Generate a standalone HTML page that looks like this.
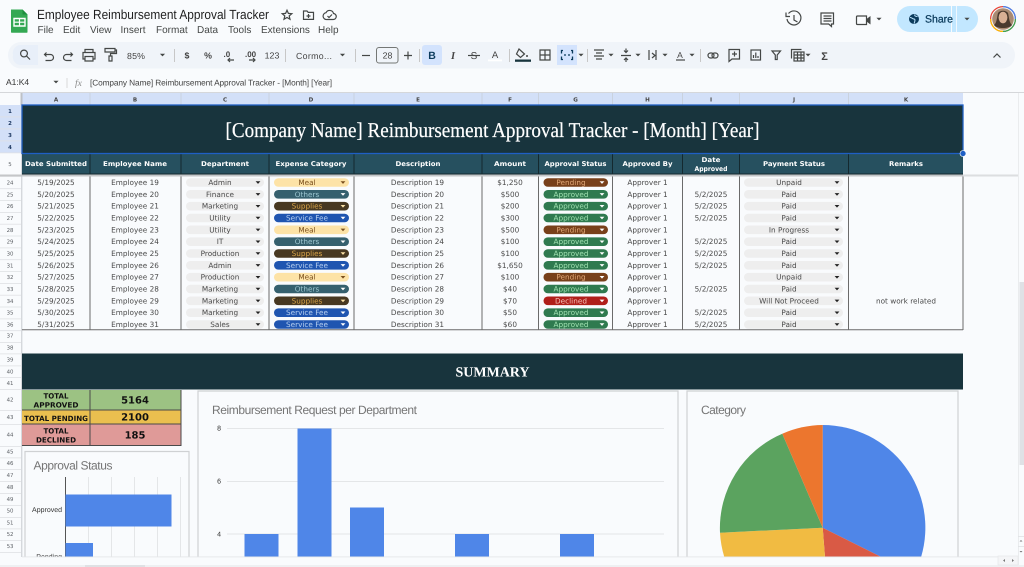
<!DOCTYPE html>
<html><head><meta charset="utf-8"><title>Employee Reimbursement Approval Tracker</title>
<style>
html,body{margin:0;padding:0;background:#f9fbfd;width:1024px;height:567px;overflow:hidden}
svg{display:block;font-family:"Liberation Sans",sans-serif;text-rendering:geometricPrecision;filter:blur(.3px)}
.c{text-anchor:middle}
.e{text-anchor:end}
.ic{fill:none;stroke:#444746;stroke-width:1.2}
.g{font-size:5.4px;fill:#5f6368;text-anchor:middle;font-family:"DejaVu Sans",sans-serif}
.gb{font-size:5.4px;fill:#1f3a63;text-anchor:middle;font-weight:bold;font-family:"DejaVu Sans",sans-serif}
.col{font-size:5.6px;fill:#444;text-anchor:middle;font-weight:bold;font-family:"DejaVu Sans",sans-serif}
.h{font-size:6.6px;fill:#fff;text-anchor:middle;font-weight:bold;font-family:"DejaVu Sans",sans-serif}
.t{font-size:7.3px;fill:#4a4a4a;text-anchor:middle;font-family:"DejaVu Sans",sans-serif}
.tb{font-size:8.8px;fill:#444;font-family:"Liberation Sans",sans-serif}
.lab{font-size:7.2px;fill:#111;text-anchor:middle;font-weight:bold;font-family:"DejaVu Sans",sans-serif}
.val{font-size:10px;fill:#111;text-anchor:middle;font-weight:bold;font-family:"DejaVu Sans",sans-serif}
.ct{font-size:12px;fill:#757575}
.ax{font-size:7px;fill:#333}
.grid{stroke:#e4e6e8;stroke-width:1}
.v{stroke:#6b6b6b;stroke-width:1}
.ck{fill:#eeeeee}.mk{fill:#fde3a7}.ok{fill:#35606e}.sk{fill:#473821}.fk{fill:#1f55b0}.pk{fill:#78401a}.ak{fill:#2f7a4f}.dk{fill:#b01f1a}
.mt{fill:#7a4f1d}.ot{fill:#9cc6d0}.st{fill:#d9a54a}.ft{fill:#b7d0f0}.pt{fill:#e2a878}.at{fill:#9fe0b0}.dt{fill:#f6c0b8}
</style></head><body>
<svg width="1024" height="567" viewBox="0 0 1024 567" xmlns="http://www.w3.org/2000/svg">
<defs>
<path id="d" d="M-2.4-1.2H2.4L0 1.4Z"/>
<path id="a" d="M-2.6-1.3H2.6L0 1.4Z" fill="#444746"/>
</defs>
<rect width="1024" height="567" fill="#f9fbfd"/>

<!-- App header -->
<path d="M11 9.5h11.5l5 5V32a.8.8 0 0 1-.8.8H11.8A.8.8 0 0 1 11 32Z" fill="#34a853"/>
<path d="M22.5 9.5l5 5h-5Z" fill="#1e8e3e"/>
<path d="M14 18.5h11v7.5H14Z" fill="none" stroke="#fff" stroke-width="1.4"/><path d="M14 22.2h11M19.5 18.5v7.5" stroke="#fff" stroke-width="1.2"/>
<text x="37" y="19" font-size="13.2" fill="#1f1f1f" textLength="232" lengthAdjust="spacingAndGlyphs">Employee Reimbursement Approval Tracker</text>
<path d="M287 10.2l1.4 3.2 3.4.3-2.6 2.2.8 3.4-3-1.8-3 1.8.8-3.4-2.6-2.2 3.4-.3Z" class="ic" stroke-width="1"/>
<path d="M303.500 11h3.500l1.200 1.400h5.300v7h-10Z" class="ic" stroke-width="1"/><path d="M308.500 14v4M306.500 16h4" class="ic" stroke-width=".9"/>
<path d="M327 19.500h6a3 3 0 0 0 .5-6 4 4 0 0 0-7.500-.8 3.400 3.400 0 0 0 1 6.800Z" class="ic" stroke-width="1"/><path d="M327.500 16l1.500 1.500 3-3" class="ic" stroke-width=".9"/>
<g font-size="10" fill="#444746">
<text x="37.500" y="33">File</text><text x="63" y="33">Edit</text><text x="90" y="33">View</text><text x="120.500" y="33">Insert</text><text x="156" y="33">Format</text><text x="197" y="33">Data</text><text x="228" y="33">Tools</text><text x="261" y="33">Extensions</text><text x="318" y="33">Help</text>
</g>

<!-- right header -->
<path d="M788.500 13.500a7 7 0 1 1-1.500 5.500" class="ic" stroke-width="1.500"/><path d="M786 12.500v4h4" class="ic" stroke-width="1.300"/><path d="M794 15v5l3.500 2" class="ic" stroke-width="1.300"/>
<path d="M821 13h12.500v11h-2v2.500l-2.800-2.500H821Z" class="ic" stroke-width="1.400"/><path d="M823.500 16h8M823.500 18.500h8M823.500 21h8" class="ic" stroke-width=".9"/>
<path d="M857.500 16h9v8.500h-9a1 1 0 0 1-1-1v-6.500a1 1 0 0 1 1-1Z" class="ic" stroke-width="1.400"/><path d="M866.500 19l4-3v8.500l-4-3Z" fill="#444746"/>
<use href="#a" x="879" y="19"/>
<path d="M910 6h41v26h-41a13 13 0 0 1 0-26Z" fill="#c2e7ff"/>
<path d="M952 6h13a13 13 0 0 1 0 26h-13Z" fill="#c2e7ff"/>
<rect x="956" y="6" width="1" height="26" fill="#f0f8ff"/>
<circle cx="914" cy="19" r="5" fill="#0b3b5c"/><path d="M910 17.500c2 0 2.500 1.500 4 1.500s1 2.500 0 4.500M915 14.500c-1 1.500 1 2 2.500 2" stroke="#c2e7ff" stroke-width="1" fill="none"/>
<text x="925" y="22.500" font-size="10.500" fill="#0b3b5c" stroke="#0b3b5c" stroke-width=".25">Share</text>
<use href="#a" x="967" y="19"/>
<circle cx="1003" cy="19" r="12.400" fill="none" stroke="#ea4335" stroke-width="1.200"/>
<path d="M1003 31.400a12.400 12.400 0 0 1-12.400-12.400" fill="none" stroke="#fbbc04" stroke-width="1.200"/>
<path d="M1015.400 19a12.400 12.400 0 0 1-12.400 12.400" fill="none" stroke="#34a853" stroke-width="1.200"/>
<path d="M1003 6.600a12.400 12.400 0 0 1 12.400 12.400" fill="none" stroke="#4285f4" stroke-width="1.200"/>
<circle cx="1003" cy="19" r="10.800" fill="#a98a72"/>
<path d="M994 25c3-2 3-9 4-12 2-3 8-3 10 0 1 3 1 10 4 12-3 4-15 4-18 0Z" fill="#4a3a2e"/>
<ellipse cx="1003" cy="17.500" rx="4.400" ry="5.800" fill="#d8b095"/>

<!-- Toolbar -->
<rect x="8" y="42" width="1007" height="26.500" rx="13" fill="#f0f4f9"/>
<path d="M13 55a8 8 0 0 1 8-10h17v20H21a8 8 0 0 1-8-10Z" fill="#e8eff9"/>
<circle cx="24" cy="53.500" r="3.400" class="ic" stroke-width="1.200"/><path d="M26.500 56l3.500 3.500" class="ic" stroke-width="1.300"/>
<path d="M44.500 54.500h6a3 3 0 0 1 0 6h-5M46.500 52.500l-2 2 2 2" class="ic"/>
<path d="M72.500 54.500h-6a3 3 0 0 0 0 6h5M70.500 52.500l2 2-2 2" class="ic"/>
<path d="M85 52.500v-3h8v3M85 59h-2v-6.500h12V59h-2M85 56.500h8v4.500h-8Z" class="ic"/>
<path d="M105 48.500h10v3.500h-10ZM115 50h1.500v3.500h-6v2.500M109 56h3v5h-3Z" class="ic" stroke-width="1.100"/>
<text x="127" y="59" class="tb" textLength="18">85%</text><use href="#a" x="162.500" y="55"/>
<rect x="174" y="49" width="1" height="13" fill="#c7c7c7"/>
<text x="187" y="58.500" class="tb c" font-weight="bold" font-size="8.500">$</text>
<text x="208" y="58.500" class="tb c" font-weight="bold" font-size="8">%</text>
<text x="223.500" y="57" font-size="8" fill="#444" font-weight="bold">.0</text><path d="M228 60h6M230 58l-2 2 2 2" class="ic" stroke-width=".9"/>
<text x="245" y="57" font-size="8" fill="#444" font-weight="bold">.00</text><path d="M249 60h6M253 58l2 2-2 2" class="ic" stroke-width=".9"/>
<text x="272" y="58.500" class="tb c" font-size="8">123</text>
<rect x="285" y="49" width="1" height="13" fill="#c7c7c7"/>
<text x="296" y="59" class="tb" textLength="36">Cormo...</text><use href="#a" x="342.500" y="55"/>
<rect x="355" y="49" width="1" height="13" fill="#c7c7c7"/>
<path d="M362 55.500h8" class="ic"/>
<rect x="376.500" y="47.500" width="21.500" height="15.500" rx="2.500" fill="none" stroke="#747775" stroke-width="1"/>
<text x="387.500" y="58.500" class="tb c">28</text>
<path d="M404 55.500h8M408 51.500v8" class="ic"/>
<rect x="419" y="49" width="1" height="13" fill="#c7c7c7"/>
<rect x="422" y="45" width="20" height="20" rx="3" fill="#d3e3fd"/>
<text x="432" y="59" font-size="10.500" font-weight="bold" fill="#0b3b5c" class="c">B</text>
<text x="453" y="59" font-size="10.500" font-style="italic" font-weight="bold" font-family="Liberation Serif" fill="#444" class="c">I</text>
<text x="474" y="59" font-size="10" fill="#444" class="c">S</text><path d="M468 55.500h12" class="ic" stroke-width=".9"/>
<text x="495" y="58" font-size="9.500" fill="#444" class="c">A</text><rect x="488" y="59.500" width="14" height="1.800" fill="#fff"/>
<rect x="509" y="49" width="1" height="13" fill="#c7c7c7"/>

<path d="M519 49l5.500 5-4 3.500-4-3.500Z" class="ic" stroke-width="1.100"/><circle cx="527" cy="56" r="1" fill="#444"/>
<rect x="515" y="59.500" width="16" height="2.300" fill="#18343d"/>
<path d="M540 50h10v10h-10ZM545 50v10M540 55h10" class="ic"/>
<rect x="557" y="45" width="20" height="20" fill="#d3e3fd"/>
<path d="M563 50.500h-1.500v3M563 59.500h-1.500v-3M571 50.500h1.500v3M571 59.500h1.500v-3M564 55h2M568 55h2" fill="none" stroke="#0b3b5c" stroke-width="1.300"/>
<use href="#a" x="581" y="55"/>
<rect x="587" y="49" width="1" height="13" fill="#c7c7c7"/>
<path d="M594 50h10M596 53h6M594 56h10M596 59h6" class="ic"/><use href="#a" x="611" y="55"/>
<path d="M621 55.500h10M626 48.500v4M624 50.500l2 2 2-2M626 62v-4M624 60l2-2 2 2" class="ic" stroke-width="1.100"/><use href="#a" x="638" y="55"/>
<path d="M649 50v10M656 50v10M652 53l3 2.500-3 2.500" class="ic"/><use href="#a" x="665" y="55"/>
<text x="680" y="58" font-size="8.500" fill="#444" class="c">A</text><path d="M676 60h9" class="ic" stroke-width=".9"/><use href="#a" x="692" y="55"/>
<rect x="700" y="49" width="1" height="13" fill="#c7c7c7"/>
<rect x="708" y="53" width="6" height="5" rx="2.500" class="ic"/><rect x="712" y="53" width="6" height="5" rx="2.500" class="ic"/>
<path d="M729 49.500h10.500v9.500h-7.500l-3 2.500Z" class="ic"/><path d="M734.500 51.500v5M732 54h5" class="ic" stroke-width="1"/>
<rect x="751" y="50" width="9.500" height="10" class="ic"/><path d="M753.500 58v-3M755.800 58v-5.500M758 58v-2" class="ic" stroke-width="1"/>
<path d="M772 51h8.500l-3.300 4v4.500h-1.900V55Z" class="ic"/>
<rect x="794" y="52" width="10" height="9" class="ic"/><path d="M794 55h10M794 58h10M797.500 52v9M801 52v9M791.500 58.500V49.500h10" class="ic" stroke-width=".9"/><use href="#a" x="808" y="55"/>
<text x="824.500" y="60" font-size="11" fill="#444" class="c" font-weight="bold">Σ</text>
<path d="M993.500 57.500l3.500-3.500 3.500 3.500" class="ic"/>

<!-- Formula bar -->
<text x="6" y="85" font-size="8.500" fill="#333">A1:K4</text><use href="#a" x="56" y="82"/>
<rect x="66.500" y="78" width="1" height="10" fill="#d9d9d9"/>
<text x="75" y="86" font-size="9.500" font-style="italic" font-family="Liberation Serif" fill="#888">fx</text>
<text x="90" y="85.500" font-size="8.300" fill="#444" textLength="242">[Company Name] Reimbursement Approval Tracker - [Month] [Year]</text>
<rect x="0" y="92" width="1024" height="1" fill="#d5d7da"/>

<!-- Column headers -->
<rect x="0" y="93" width="22" height="12" fill="#f9fbfd"/>
<rect x="22" y="93" width="941" height="12" fill="#d3e0f8"/>
<rect x="20.500" y="93" width="2" height="12" fill="#bdc1c6"/>
<g fill="#c9d2df">
<rect x="89.500" y="93" width="1" height="12"/><rect x="180.500" y="93" width="1" height="12"/><rect x="268.500" y="93" width="1" height="12"/><rect x="353.500" y="93" width="1" height="12"/><rect x="481.500" y="93" width="1" height="12"/><rect x="538" y="93" width="1" height="12"/><rect x="612" y="93" width="1" height="12"/><rect x="682" y="93" width="1" height="12"/><rect x="739" y="93" width="1" height="12"/><rect x="848" y="93" width="1" height="12"/>
</g>
<text x="56" y="101.500" class="col">A</text><text x="135" y="101.500" class="col">B</text><text x="225" y="101.500" class="col">C</text><text x="311" y="101.500" class="col">D</text><text x="418" y="101.500" class="col">E</text><text x="510" y="101.500" class="col">F</text><text x="575.500" y="101.500" class="col">G</text><text x="647.500" y="101.500" class="col">H</text><text x="711" y="101.500" class="col">I</text><text x="794" y="101.500" class="col">J</text><text x="906" y="101.500" class="col">K</text>

<!-- Row gutter -->
<rect x="0" y="105" width="22" height="48" fill="#d3e0f8"/>
<g fill="#dfe1e4">
<rect x="0" y="116.500" width="22" height=".8"/><rect x="0" y="128.500" width="22" height=".8"/><rect x="0" y="140.500" width="22" height=".8"/><rect x="0" y="152.500" width="22" height=".8"/>
<rect x="0" y="176" width="22" height=".8"/><rect x="0" y="188.300" width="22" height=".8"/><rect x="0" y="200.100" width="22" height=".8"/><rect x="0" y="212" width="22" height=".8"/><rect x="0" y="223.800" width="22" height=".8"/><rect x="0" y="235.600" width="22" height=".8"/><rect x="0" y="247.500" width="22" height=".8"/><rect x="0" y="259.300" width="22" height=".8"/><rect x="0" y="271.100" width="22" height=".8"/><rect x="0" y="283" width="22" height=".8"/><rect x="0" y="294.800" width="22" height=".8"/><rect x="0" y="306.600" width="22" height=".8"/><rect x="0" y="318.500" width="22" height=".8"/><rect x="0" y="330.300" width="22" height=".8"/><rect x="0" y="342" width="22" height=".8"/><rect x="0" y="353.500" width="22" height=".8"/><rect x="0" y="365.500" width="22" height=".8"/><rect x="0" y="377" width="22" height=".8"/><rect x="0" y="389" width="22" height=".8"/><rect x="0" y="410" width="22" height=".8"/><rect x="0" y="424" width="22" height=".8"/><rect x="0" y="446" width="22" height=".8"/><rect x="0" y="457.500" width="22" height=".8"/><rect x="0" y="469" width="22" height=".8"/><rect x="0" y="481" width="22" height=".8"/><rect x="0" y="493" width="22" height=".8"/><rect x="0" y="505" width="22" height=".8"/><rect x="0" y="517" width="22" height=".8"/><rect x="0" y="528.500" width="22" height=".8"/><rect x="0" y="540" width="22" height=".8"/><rect x="0" y="552" width="22" height=".8"/>
</g>
<rect x="21" y="105" width="1.400" height="452" fill="#d5d8dc"/>
<text x="10" y="113" class="gb">1</text><text x="10" y="125" class="gb">2</text><text x="10" y="137" class="gb">3</text><text x="10" y="149" class="gb">4</text>
<text x="10" y="166" class="g">5</text>
<text x="10" y="184.500" class="g">24</text><text x="10" y="196.300" class="g">25</text><text x="10" y="208.200" class="g">26</text><text x="10" y="220" class="g">27</text><text x="10" y="231.800" class="g">28</text><text x="10" y="243.700" class="g">29</text><text x="10" y="255.500" class="g">30</text><text x="10" y="267.300" class="g">31</text><text x="10" y="279.200" class="g">32</text><text x="10" y="291" class="g">33</text><text x="10" y="302.800" class="g">34</text><text x="10" y="314.700" class="g">35</text><text x="10" y="326.500" class="g">36</text>
<text x="10" y="337.700" class="g">37</text><text x="10" y="349.700" class="g">38</text><text x="10" y="361.700" class="g">39</text><text x="10" y="373.500" class="g">40</text><text x="10" y="385" class="g">41</text><text x="10" y="401.500" class="g">42</text><text x="10" y="419" class="g">43</text><text x="10" y="436.500" class="g">44</text><text x="10" y="453.500" class="g">45</text><text x="10" y="465" class="g">46</text><text x="10" y="477" class="g">47</text><text x="10" y="489" class="g">48</text><text x="10" y="501" class="g">49</text><text x="10" y="512.500" class="g">50</text><text x="10" y="524.500" class="g">51</text><text x="10" y="536" class="g">52</text><text x="10" y="548" class="g">53</text>

<!-- Title band -->
<rect x="22" y="105.500" width="941" height="48" fill="#18343d"/>
<text x="492.500" y="137" font-family="Liberation Serif" font-size="21" fill="#fff" stroke="#fff" stroke-width=".2" text-anchor="middle" textLength="534" lengthAdjust="spacingAndGlyphs">[Company Name] Reimbursement Approval Tracker - [Month] [Year]</text>

<!-- Header row -->
<rect x="22" y="154" width="941" height="20.500" fill="#26505f"/>
<g fill="#14292f">
<rect x="89.500" y="154" width="1" height="21"/><rect x="180.500" y="154" width="1" height="21"/><rect x="268.500" y="154" width="1" height="21"/><rect x="353.500" y="154" width="1" height="21"/><rect x="481.500" y="154" width="1" height="21"/><rect x="538" y="154" width="1" height="21"/><rect x="612" y="154" width="1" height="21"/><rect x="682" y="154" width="1" height="21"/><rect x="739" y="154" width="1" height="21"/><rect x="848" y="154" width="1" height="21"/>
<rect x="22" y="173.500" width="941" height="1"/>
</g>
<rect x="22" y="105" width="941" height="48.500" fill="none" stroke="#1f5fc4" stroke-width="1.300"/>
<circle cx="963" cy="153.500" r="3" fill="#1f5fc4" stroke="#fff" stroke-width=".6"/>
<rect x="0" y="174.500" width="963" height="2" fill="#c4c6c8"/>
<rect x="963" y="174.500" width="55" height="2" fill="#dcdee0"/>
<text x="56" y="166" class="h" textLength="62" lengthAdjust="spacingAndGlyphs">Date Submitted</text>
<text x="135" y="166" class="h" textLength="64" lengthAdjust="spacingAndGlyphs">Employee Name</text>
<text x="225" y="166" class="h" textLength="48" lengthAdjust="spacingAndGlyphs">Department</text>
<text x="311" y="166" class="h" textLength="71" lengthAdjust="spacingAndGlyphs">Expense Category</text>
<text x="418" y="166" class="h" textLength="45" lengthAdjust="spacingAndGlyphs">Description</text>
<text x="510" y="166" class="h" textLength="32" lengthAdjust="spacingAndGlyphs">Amount</text>
<text x="575.500" y="166" class="h" textLength="62" lengthAdjust="spacingAndGlyphs">Approval Status</text>
<text x="647.500" y="166" class="h" textLength="50" lengthAdjust="spacingAndGlyphs">Approved By</text>
<text x="711" y="162" class="h" textLength="19" lengthAdjust="spacingAndGlyphs">Date</text>
<text x="711" y="171" class="h" textLength="33" lengthAdjust="spacingAndGlyphs">Approved</text>
<text x="794" y="166" class="h" textLength="62" lengthAdjust="spacingAndGlyphs">Payment Status</text>
<text x="906" y="166" class="h" textLength="34" lengthAdjust="spacingAndGlyphs">Remarks</text>

<!-- Data rows -->
<g transform="translate(0,182.500)"><text x="56" y="2.500" class="t">5/19/2025</text><text x="135" y="2.500" class="t">Employee 19</text><rect x="186" y="-4.300" width="78" height="8.600" rx="4.300" class="ck"/><text x="220" y="2.500" class="t">Admin</text><use href="#d" x="258" fill="#222"/><rect x="274" y="-4.300" width="75" height="8.600" rx="4.300" class="mk"/><text x="307" y="2.500" class="t mt">Meal</text><use href="#d" x="343" fill="#7a4f1d"/><text x="417.500" y="2.500" class="t">Description 19</text><text x="510" y="2.500" class="t">$1,250</text><rect x="543.500" y="-4.300" width="64.500" height="8.600" rx="4.300" class="pk"/><text x="571" y="2.500" class="t pt">Pending</text><use href="#d" x="602" fill="#fff"/><text x="647.500" y="2.500" class="t">Approver 1</text><rect x="744" y="-4.300" width="99" height="8.600" rx="4.300" class="ck"/><text x="789" y="2.500" class="t">Unpaid</text><use href="#d" x="837" fill="#222"/></g>

<g transform="translate(0,194.300)"><text x="56" y="2.500" class="t">5/20/2025</text><text x="135" y="2.500" class="t">Employee 20</text><rect x="186" y="-4.300" width="78" height="8.600" rx="4.300" class="ck"/><text x="220" y="2.500" class="t">Finance</text><use href="#d" x="258" fill="#222"/><rect x="274" y="-4.300" width="75" height="8.600" rx="4.300" class="ok"/><text x="307" y="2.500" class="t ot">Others</text><use href="#d" x="343" fill="#fff"/><text x="417.500" y="2.500" class="t">Description 20</text><text x="510" y="2.500" class="t">$500</text><rect x="543.500" y="-4.300" width="64.500" height="8.600" rx="4.300" class="ak"/><text x="571" y="2.500" class="t at">Approved</text><use href="#d" x="602" fill="#fff"/><text x="647.500" y="2.500" class="t">Approver 1</text><text x="711" y="2.500" class="t">5/2/2025</text><rect x="744" y="-4.300" width="99" height="8.600" rx="4.300" class="ck"/><text x="789" y="2.500" class="t">Paid</text><use href="#d" x="837" fill="#222"/></g>

<g transform="translate(0,206.200)"><text x="56" y="2.500" class="t">5/21/2025</text><text x="135" y="2.500" class="t">Employee 21</text><rect x="186" y="-4.300" width="78" height="8.600" rx="4.300" class="ck"/><text x="220" y="2.500" class="t">Marketing</text><use href="#d" x="258" fill="#222"/><rect x="274" y="-4.300" width="75" height="8.600" rx="4.300" class="sk"/><text x="307" y="2.500" class="t st">Supplies</text><use href="#d" x="343" fill="#fde3a7"/><text x="417.500" y="2.500" class="t">Description 21</text><text x="510" y="2.500" class="t">$200</text><rect x="543.500" y="-4.300" width="64.500" height="8.600" rx="4.300" class="ak"/><text x="571" y="2.500" class="t at">Approved</text><use href="#d" x="602" fill="#fff"/><text x="647.500" y="2.500" class="t">Approver 1</text><text x="711" y="2.500" class="t">5/2/2025</text><rect x="744" y="-4.300" width="99" height="8.600" rx="4.300" class="ck"/><text x="789" y="2.500" class="t">Paid</text><use href="#d" x="837" fill="#222"/></g>

<g transform="translate(0,218)"><text x="56" y="2.500" class="t">5/22/2025</text><text x="135" y="2.500" class="t">Employee 22</text><rect x="186" y="-4.300" width="78" height="8.600" rx="4.300" class="ck"/><text x="220" y="2.500" class="t">Utility</text><use href="#d" x="258" fill="#222"/><rect x="274" y="-4.300" width="75" height="8.600" rx="4.300" class="fk"/><text x="307" y="2.500" class="t ft">Service Fee</text><use href="#d" x="343" fill="#fff"/><text x="417.500" y="2.500" class="t">Description 22</text><text x="510" y="2.500" class="t">$300</text><rect x="543.500" y="-4.300" width="64.500" height="8.600" rx="4.300" class="ak"/><text x="571" y="2.500" class="t at">Approved</text><use href="#d" x="602" fill="#fff"/><text x="647.500" y="2.500" class="t">Approver 1</text><text x="711" y="2.500" class="t">5/2/2025</text><rect x="744" y="-4.300" width="99" height="8.600" rx="4.300" class="ck"/><text x="789" y="2.500" class="t">Paid</text><use href="#d" x="837" fill="#222"/></g>

<g transform="translate(0,229.800)"><text x="56" y="2.500" class="t">5/23/2025</text><text x="135" y="2.500" class="t">Employee 23</text><rect x="186" y="-4.300" width="78" height="8.600" rx="4.300" class="ck"/><text x="220" y="2.500" class="t">Utility</text><use href="#d" x="258" fill="#222"/><rect x="274" y="-4.300" width="75" height="8.600" rx="4.300" class="mk"/><text x="307" y="2.500" class="t mt">Meal</text><use href="#d" x="343" fill="#7a4f1d"/><text x="417.500" y="2.500" class="t">Description 23</text><text x="510" y="2.500" class="t">$500</text><rect x="543.500" y="-4.300" width="64.500" height="8.600" rx="4.300" class="pk"/><text x="571" y="2.500" class="t pt">Pending</text><use href="#d" x="602" fill="#fff"/><text x="647.500" y="2.500" class="t">Approver 1</text><rect x="744" y="-4.300" width="99" height="8.600" rx="4.300" class="ck"/><text x="789" y="2.500" class="t">In Progress</text><use href="#d" x="837" fill="#222"/></g>

<g transform="translate(0,241.700)"><text x="56" y="2.500" class="t">5/24/2025</text><text x="135" y="2.500" class="t">Employee 24</text><rect x="186" y="-4.300" width="78" height="8.600" rx="4.300" class="ck"/><text x="220" y="2.500" class="t">IT</text><use href="#d" x="258" fill="#222"/><rect x="274" y="-4.300" width="75" height="8.600" rx="4.300" class="ok"/><text x="307" y="2.500" class="t ot">Others</text><use href="#d" x="343" fill="#fff"/><text x="417.500" y="2.500" class="t">Description 24</text><text x="510" y="2.500" class="t">$100</text><rect x="543.500" y="-4.300" width="64.500" height="8.600" rx="4.300" class="ak"/><text x="571" y="2.500" class="t at">Approved</text><use href="#d" x="602" fill="#fff"/><text x="647.500" y="2.500" class="t">Approver 1</text><text x="711" y="2.500" class="t">5/2/2025</text><rect x="744" y="-4.300" width="99" height="8.600" rx="4.300" class="ck"/><text x="789" y="2.500" class="t">Paid</text><use href="#d" x="837" fill="#222"/></g>

<g transform="translate(0,253.500)"><text x="56" y="2.500" class="t">5/25/2025</text><text x="135" y="2.500" class="t">Employee 25</text><rect x="186" y="-4.300" width="78" height="8.600" rx="4.300" class="ck"/><text x="220" y="2.500" class="t">Production</text><use href="#d" x="258" fill="#222"/><rect x="274" y="-4.300" width="75" height="8.600" rx="4.300" class="sk"/><text x="307" y="2.500" class="t st">Supplies</text><use href="#d" x="343" fill="#fde3a7"/><text x="417.500" y="2.500" class="t">Description 25</text><text x="510" y="2.500" class="t">$100</text><rect x="543.500" y="-4.300" width="64.500" height="8.600" rx="4.300" class="ak"/><text x="571" y="2.500" class="t at">Approved</text><use href="#d" x="602" fill="#fff"/><text x="647.500" y="2.500" class="t">Approver 1</text><text x="711" y="2.500" class="t">5/2/2025</text><rect x="744" y="-4.300" width="99" height="8.600" rx="4.300" class="ck"/><text x="789" y="2.500" class="t">Paid</text><use href="#d" x="837" fill="#222"/></g>

<g transform="translate(0,265.300)"><text x="56" y="2.500" class="t">5/26/2025</text><text x="135" y="2.500" class="t">Employee 26</text><rect x="186" y="-4.300" width="78" height="8.600" rx="4.300" class="ck"/><text x="220" y="2.500" class="t">Admin</text><use href="#d" x="258" fill="#222"/><rect x="274" y="-4.300" width="75" height="8.600" rx="4.300" class="fk"/><text x="307" y="2.500" class="t ft">Service Fee</text><use href="#d" x="343" fill="#fff"/><text x="417.500" y="2.500" class="t">Description 26</text><text x="510" y="2.500" class="t">$1,650</text><rect x="543.500" y="-4.300" width="64.500" height="8.600" rx="4.300" class="ak"/><text x="571" y="2.500" class="t at">Approved</text><use href="#d" x="602" fill="#fff"/><text x="647.500" y="2.500" class="t">Approver 1</text><text x="711" y="2.500" class="t">5/2/2025</text><rect x="744" y="-4.300" width="99" height="8.600" rx="4.300" class="ck"/><text x="789" y="2.500" class="t">Paid</text><use href="#d" x="837" fill="#222"/></g>

<g transform="translate(0,277.200)"><text x="56" y="2.500" class="t">5/27/2025</text><text x="135" y="2.500" class="t">Employee 27</text><rect x="186" y="-4.300" width="78" height="8.600" rx="4.300" class="ck"/><text x="220" y="2.500" class="t">Production</text><use href="#d" x="258" fill="#222"/><rect x="274" y="-4.300" width="75" height="8.600" rx="4.300" class="mk"/><text x="307" y="2.500" class="t mt">Meal</text><use href="#d" x="343" fill="#7a4f1d"/><text x="417.500" y="2.500" class="t">Description 27</text><text x="510" y="2.500" class="t">$100</text><rect x="543.500" y="-4.300" width="64.500" height="8.600" rx="4.300" class="pk"/><text x="571" y="2.500" class="t pt">Pending</text><use href="#d" x="602" fill="#fff"/><text x="647.500" y="2.500" class="t">Approver 1</text><rect x="744" y="-4.300" width="99" height="8.600" rx="4.300" class="ck"/><text x="789" y="2.500" class="t">Unpaid</text><use href="#d" x="837" fill="#222"/></g>

<g transform="translate(0,289)"><text x="56" y="2.500" class="t">5/28/2025</text><text x="135" y="2.500" class="t">Employee 28</text><rect x="186" y="-4.300" width="78" height="8.600" rx="4.300" class="ck"/><text x="220" y="2.500" class="t">Marketing</text><use href="#d" x="258" fill="#222"/><rect x="274" y="-4.300" width="75" height="8.600" rx="4.300" class="ok"/><text x="307" y="2.500" class="t ot">Others</text><use href="#d" x="343" fill="#fff"/><text x="417.500" y="2.500" class="t">Description 28</text><text x="510" y="2.500" class="t">$40</text><rect x="543.500" y="-4.300" width="64.500" height="8.600" rx="4.300" class="ak"/><text x="571" y="2.500" class="t at">Approved</text><use href="#d" x="602" fill="#fff"/><text x="647.500" y="2.500" class="t">Approver 1</text><text x="711" y="2.500" class="t">5/2/2025</text><rect x="744" y="-4.300" width="99" height="8.600" rx="4.300" class="ck"/><text x="789" y="2.500" class="t">Paid</text><use href="#d" x="837" fill="#222"/></g>

<g transform="translate(0,300.800)"><text x="56" y="2.500" class="t">5/29/2025</text><text x="135" y="2.500" class="t">Employee 29</text><rect x="186" y="-4.300" width="78" height="8.600" rx="4.300" class="ck"/><text x="220" y="2.500" class="t">Marketing</text><use href="#d" x="258" fill="#222"/><rect x="274" y="-4.300" width="75" height="8.600" rx="4.300" class="sk"/><text x="307" y="2.500" class="t st">Supplies</text><use href="#d" x="343" fill="#fde3a7"/><text x="417.500" y="2.500" class="t">Description 29</text><text x="510" y="2.500" class="t">$70</text><rect x="543.500" y="-4.300" width="64.500" height="8.600" rx="4.300" class="dk"/><text x="571" y="2.500" class="t dt">Declined</text><use href="#d" x="602" fill="#fff"/><text x="647.500" y="2.500" class="t">Approver 1</text><rect x="744" y="-4.300" width="99" height="8.600" rx="4.300" class="ck"/><text x="789" y="2.500" class="t">Will Not Proceed</text><use href="#d" x="837" fill="#222"/><text x="906" y="2.500" class="t">not work related</text></g>

<g transform="translate(0,312.700)"><text x="56" y="2.500" class="t">5/30/2025</text><text x="135" y="2.500" class="t">Employee 30</text><rect x="186" y="-4.300" width="78" height="8.600" rx="4.300" class="ck"/><text x="220" y="2.500" class="t">Marketing</text><use href="#d" x="258" fill="#222"/><rect x="274" y="-4.300" width="75" height="8.600" rx="4.300" class="fk"/><text x="307" y="2.500" class="t ft">Service Fee</text><use href="#d" x="343" fill="#fff"/><text x="417.500" y="2.500" class="t">Description 30</text><text x="510" y="2.500" class="t">$50</text><rect x="543.500" y="-4.300" width="64.500" height="8.600" rx="4.300" class="ak"/><text x="571" y="2.500" class="t at">Approved</text><use href="#d" x="602" fill="#fff"/><text x="647.500" y="2.500" class="t">Approver 1</text><text x="711" y="2.500" class="t">5/2/2025</text><rect x="744" y="-4.300" width="99" height="8.600" rx="4.300" class="ck"/><text x="789" y="2.500" class="t">Paid</text><use href="#d" x="837" fill="#222"/></g>

<g transform="translate(0,324.500)"><text x="56" y="2.500" class="t">5/31/2025</text><text x="135" y="2.500" class="t">Employee 31</text><rect x="186" y="-4.300" width="78" height="8.600" rx="4.300" class="ck"/><text x="220" y="2.500" class="t">Sales</text><use href="#d" x="258" fill="#222"/><rect x="274" y="-4.300" width="75" height="8.600" rx="4.300" class="fk"/><text x="307" y="2.500" class="t ft">Service Fee</text><use href="#d" x="343" fill="#fff"/><text x="417.500" y="2.500" class="t">Description 31</text><text x="510" y="2.500" class="t">$60</text><rect x="543.500" y="-4.300" width="64.500" height="8.600" rx="4.300" class="ak"/><text x="571" y="2.500" class="t at">Approved</text><use href="#d" x="602" fill="#fff"/><text x="647.500" y="2.500" class="t">Approver 1</text><text x="711" y="2.500" class="t">5/2/2025</text><rect x="744" y="-4.300" width="99" height="8.600" rx="4.300" class="ck"/><text x="789" y="2.500" class="t">Paid</text><use href="#d" x="837" fill="#222"/></g>

<!-- Table verticals -->
<path class="v" d="M90 176.500V330M181 176.500V330M269 176.500V330M354 176.500V330M482 176.500V330M538.500 176.500V330M612.500 176.500V330M682.500 176.500V330M739.500 176.500V330M848.500 176.500V330M963 176.500V330M22 329.800H963"/>

<!-- Summary band -->
<rect x="22" y="353.500" width="941" height="36" fill="#18343d"/>
<text x="492.500" y="376.500" font-family="Liberation Serif" font-weight="bold" font-size="14" fill="#fff" text-anchor="middle" textLength="74">SUMMARY</text>

<!-- Totals -->
<rect x="22" y="390" width="68" height="20" fill="#9cc283"/><rect x="90" y="390" width="91" height="20" fill="#9cc283"/>
<rect x="22" y="410" width="68" height="14" fill="#eabf4f"/><rect x="90" y="410" width="91" height="14" fill="#eabf4f"/>
<rect x="22" y="424" width="68" height="22" fill="#df9a98"/><rect x="90" y="424" width="91" height="22" fill="#df9a98"/>
<path d="M22 410H181M22 424H181M22 445.500H181M90 390V446M181 390V446" stroke="#4a4a4a" stroke-width="1" fill="none"/>
<text x="56" y="398.500" class="lab" textLength="25" lengthAdjust="spacingAndGlyphs">TOTAL</text><text x="56" y="407.500" class="lab" textLength="45" lengthAdjust="spacingAndGlyphs">APPROVED</text>
<text x="56" y="421" class="lab" textLength="64" lengthAdjust="spacingAndGlyphs">TOTAL PENDING</text>
<text x="56" y="433.500" class="lab" textLength="25" lengthAdjust="spacingAndGlyphs">TOTAL</text><text x="56" y="442.500" class="lab" textLength="40" lengthAdjust="spacingAndGlyphs">DECLINED</text>
<text x="135" y="403.500" class="val">5164</text><text x="135" y="420.500" class="val">2100</text><text x="135" y="438.500" class="val">185</text>

<!-- Charts -->
<path d="M25 557V451.500H189V557" fill="#f9fbfd" stroke="#cfd1d3" stroke-width="1.200"/>
<text x="33.500" y="469.500" class="ct" textLength="79">Approval Status</text>
<path class="grid" d="M88.500 477V557M111.500 477V557M134.500 477V557M157.500 477V557M180.500 477V557"/>
<path d="M65.500 477V557" stroke="#555" stroke-width="1"/>
<rect x="65.500" y="494.500" width="106" height="32" fill="#4f86e8"/>
<rect x="65.500" y="543" width="27.500" height="14" fill="#4f86e8"/>
<text x="62" y="512" class="ax e" font-size="7">Approved</text>

<path d="M198 557V391H678V557" fill="#f9fbfd" stroke="#cfd1d3" stroke-width="1.200"/>
<text x="212" y="414" class="ct" textLength="205">Reimbursement Request per Department</text>
<path class="grid" d="M227 428.500H664M227 481.500H664M227 534H664"/>
<text x="221" y="430.500" class="ax e">8</text><text x="221" y="483.500" class="ax e">6</text><text x="221" y="536.500" class="ax e">4</text>
<g fill="#4f86e8"><rect x="244.500" y="534" width="34" height="23"/><rect x="297.500" y="428.500" width="34" height="128.500"/><rect x="350" y="507.500" width="34" height="49.500"/><rect x="455" y="534" width="34" height="23"/><rect x="560" y="534" width="34" height="23"/></g>

<path d="M687 557V391H958V557" fill="#f9fbfd" stroke="#cfd1d3" stroke-width="1.200"/>
<text x="701" y="414" class="ct" textLength="45">Category</text>
<path d="M822.700 527.700V425A102.700 102.700 0 0 1 921.100 557H881.300Z" fill="#4f86e8"/>
<path d="M822.700 527.700L881.300 557H825Z" fill="#d95a45"/>
<path d="M822.700 527.700L825 557H724.300A102.700 102.700 0 0 1 720 532.700Z" fill="#f1bb42"/>
<path d="M822.700 527.700L720 532.700A102.700 102.700 0 0 1 782.300 433.700Z" fill="#5ba35f"/>
<path d="M822.700 527.700L782.300 433.700A102.700 102.700 0 0 1 822.700 425Z" fill="#ec762e"/>

<!-- Bottom strip -->
<text x="62" y="559" class="ax e" font-size="5">Pending</text>
<rect x="0" y="557" width="1024" height="10" fill="#f9fbfd"/>
<rect x="22" y="556.500" width="996" height=".8" fill="#e3e5e8"/>
<rect x="0" y="565" width="1024" height="2" fill="#eef0f2"/>
<rect x="85" y="565" width="60" height="2" fill="#dfe1e4"/>

<!-- Scrollbar -->
<rect x="1018" y="93" width="6" height="472" fill="#f9fbfd"/>
<rect x="1018" y="93" width=".8" height="472" fill="#e6e8ea"/>
<rect x="1019.500" y="282" width="4.500" height="183" fill="#dfe1e5"/>
<rect x="1018" y="536" width="6" height=".8" fill="#dfe1e4"/><rect x="1018" y="546" width="6" height=".8" fill="#dfe1e4"/>
<path d="M1021 540l-1.500 1.500h3ZM1021 552.500l-1.500-1.500h3Z" fill="#777"/>
<rect x="998" y="556" width="20" height="9" fill="#f4f5f7" stroke="#e3e5e8" stroke-width=".6"/>
<path d="M1003 560.500l2-1.500v3ZM1014 560.500l-2-1.500v3Z" fill="#777"/>
</svg>
</body></html>
